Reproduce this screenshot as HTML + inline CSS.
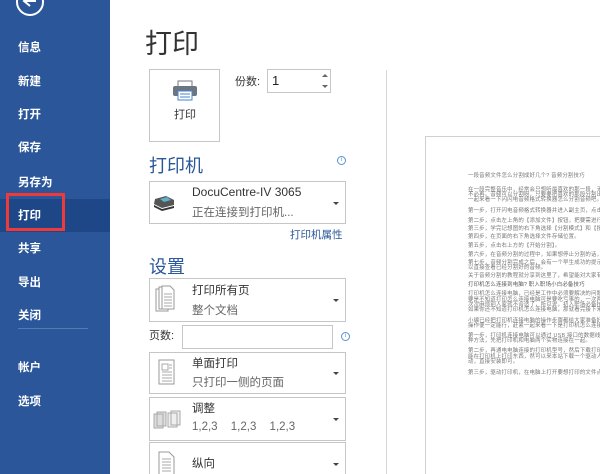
<!DOCTYPE html>
<html style="width:600px;height:474px;overflow:hidden"><head><meta charset="utf-8"><style>
*{margin:0;padding:0;box-sizing:border-box}
body{width:600px;height:474px;overflow:hidden;background:#fff;position:relative;font-family:"Liberation Sans","Noto Sans CJK SC",sans-serif;color:#444}
.a{position:absolute}
#side{left:0;top:0;width:110px;height:474px;background:#2b579a}
.m{position:absolute;left:18px;color:#fff;font-size:11.5px;font-weight:bold}
.dd{position:absolute;left:149px;width:197px;border:1px solid #c6c6c6;background:#fff}
.arr{position:absolute;right:6px;top:50%;margin-top:-1px;border-left:3px solid transparent;border-right:3px solid transparent;border-top:3px solid #444}
.t1{position:absolute;left:42px;font-size:11.5px;color:#333}
.t2{position:absolute;left:42px;font-size:11.5px;color:#666}
.h{position:absolute;left:149px;font-size:18px;color:#2b579a}
.pl{position:absolute;left:468px;font-size:5.4px;color:#777;white-space:nowrap;width:132px;overflow:hidden;letter-spacing:0.2px}
.info{position:absolute;width:9px;height:9px;border:1px solid #5b8fd6;border-radius:50%;color:#5b8fd6;font-size:6px;text-align:center;line-height:7px}
</style></head><body>
<div id="side" class="a">
 <div class="a" style="left:16px;top:-12px;width:28px;height:28px;border:2px solid #fff;border-radius:50%"></div>
 <svg class="a" style="left:20px;top:-5px" width="20" height="16"><path d="M16 6H5M10 1L4 6L10 11" stroke="#fff" stroke-width="2" fill="none"/></svg>
 <div class="m" style="top:39px">信息</div>
 <div class="m" style="top:73px">新建</div>
 <div class="m" style="top:106px">打开</div>
 <div class="m" style="top:139px">保存</div>
 <div class="m" style="top:174px">另存为</div>
 <div class="a" style="left:0;top:199px;width:110px;height:33px;background:#1e4788"></div>
 <div class="a" style="left:6px;top:193px;width:59px;height:38px;border:3px solid #f03a3a"></div>
 <div class="m" style="top:207px">打印</div>
 <div class="m" style="top:240px">共享</div>
 <div class="m" style="top:274px">导出</div>
 <div class="m" style="top:307px">关闭</div>
 <div class="a" style="left:18px;top:328px;width:70px;height:1px;background:#5679b0"></div>
 <div class="m" style="top:359px">帐户</div>
 <div class="m" style="top:393px">选项</div>
</div>
<div class="a" style="left:145px;top:22px;font-size:27px;color:#333">打印</div>
<div class="a" style="left:149px;top:69px;width:71px;height:73px;border:1px solid #c6c6c6"></div>
<svg class="a" style="left:172px;top:80px" width="26" height="22"><rect x="6" y="1" width="14" height="6" fill="#fff" stroke="#777"/><rect x="1" y="6" width="24" height="10" rx="2" fill="#6d7580"/><rect x="6" y="11" width="14" height="9" fill="#fff" stroke="#4a86d0"/><line x1="8" y1="14" x2="18" y2="14" stroke="#4a86d0"/><line x1="8" y1="17" x2="18" y2="17" stroke="#4a86d0"/></svg>
<div class="a" style="left:174px;top:106px;font-size:11px;color:#333">打印</div>
<div class="a" style="left:235px;top:73px;font-size:11px;color:#333">份数:</div>
<div class="a" style="left:267px;top:69px;width:64px;height:24px;border:1px solid #c6c6c6"></div>
<div class="a" style="left:272px;top:73px;font-size:13px;color:#222">1</div>
<div class="a" style="left:322px;top:74px;border-left:3px solid transparent;border-right:3px solid transparent;border-bottom:3px solid #666"></div>
<div class="a" style="left:322px;top:85px;border-left:3px solid transparent;border-right:3px solid transparent;border-top:3px solid #666"></div>
<div class="a" style="left:386px;top:70px;width:1px;height:404px;background:#d8d8d8"></div>
<div class="h" style="top:152px">打印机</div>
<div class="info" style="left:337px;top:156px">i</div>
<div class="dd" style="top:181px;height:43px">
 <svg class="a" style="left:2px;top:12px" width="24" height="18"><path d="M3 5L14 2L22 6L22 11L10 14L2 10Z" fill="#555"/><path d="M8 5L15 3L19 6L12 8Z" fill="#5db2c8"/><path d="M2 11L10 15L22 12L22 14L10 17L2 13Z" fill="#333"/></svg>
 <div class="t1" style="top:3px;font-size:12px">DocuCentre-IV 3065</div>
 <div class="t2" style="top:22px">正在连接到打印机...</div>
 <div class="arr"></div>
</div>
<div class="a" style="left:290px;top:227px;font-size:10.5px;color:#2b579a">打印机属性</div>
<div class="h" style="top:253px">设置</div>
<div class="dd" style="top:278px;height:44px">
 <svg class="a" style="left:5px;top:6px" width="24" height="30"><rect x="1" y="4" width="12" height="22" fill="#fff" stroke="#999"/><rect x="4" y="2" width="12" height="22" fill="#fff" stroke="#999"/><path d="M7 1H15L19 5V24H7Z" fill="#fff" stroke="#999"/><path d="M9 9H17M9 12H17M9 15H17M9 18H17M9 21H17" stroke="#aaa"/></svg>
 <div class="t1" style="top:3px">打印所有页</div>
 <div class="t2" style="top:23px">整个文档</div>
 <div class="arr"></div>
</div>
<div class="a" style="left:149px;top:327px;font-size:11px;color:#333">页数:</div>
<div class="a" style="left:182px;top:325px;width:151px;height:24px;border:1px solid #c6c6c6"></div>
<div class="info" style="left:341px;top:332px">i</div>
<div class="dd" style="top:352px;height:42px">
 <svg class="a" style="left:5px;top:6px" width="24" height="30"><path d="M4 1H19V25H4Z" fill="#fff" stroke="#999"/><rect x="7" y="5" width="6" height="6" fill="none" stroke="#aaa"/><path d="M14 6H17M14 9H17M7 13H17M7 16H17M7 19H17M7 22H17" stroke="#aaa"/></svg>
 <div class="t1" style="top:2px">单面打印</div>
 <div class="t2" style="top:21px">只打印一侧的页面</div>
 <div class="arr"></div>
</div>
<div class="dd" style="top:397px;height:44px">
 <svg class="a" style="left:3px;top:12px" width="30" height="20"><path d="M1 4H10V18H1ZM4 2H13V16H4Z" fill="#ddd" stroke="#aaa"/><path d="M15 3H24V17H15ZM18 1H27V15H18Z" fill="#eee" stroke="#aaa"/></svg>
 <div class="t1" style="top:2px">调整</div>
 <div class="t2" style="top:23px;word-spacing:10px">1,2,3 1,2,3 1,2,3</div>
 <div class="arr"></div>
</div>
<div class="dd" style="top:442px;height:32px;border-bottom:none">
 <svg class="a" style="left:7px;top:8px" width="20" height="24"><path d="M2 1H12L17 6V27H2Z" fill="#fff" stroke="#999"/><path d="M5 8H14M5 11H14M5 14H14M5 17H14M5 20H14" stroke="#aaa"/></svg>
 <div class="t1" style="top:12px">纵向</div>
 <div class="arr" style="margin-top:4px"></div>
</div>
<div class="a" style="left:425px;top:136px;width:175px;height:338px;border:1px solid #d0d0d0;border-right:none;border-bottom:none;background:#fff"></div>
<div class="pl" style="top:171px">一段音频文件怎么分割成好几个? 音频分割技巧</div>
<div class="pl" style="top:185px">在一段完整音乐中，经常会只想听最喜欢的那一段，无论</div>
<div class="pl" style="top:190px">不必再。音频可以分割呀，只要要把喜欢的那段分割出来</div>
<div class="pl" style="top:195px">一起来看一下闪闪电音频格式转换器怎么分割音频吧。</div>
<div class="pl" style="top:206px">第一步，打开闪电音频格式转换器并进入副主页，点击左</div>
<div class="pl" style="top:216px">第二步，点击左上角的【添加文件】按钮，把要需进行分</div>
<div class="pl" style="top:224px">第三步，学完记想图的右下角选择【分割模式】和【按照</div>
<div class="pl" style="top:232px">第四步，在页面的右下角选择文件存储位置。</div>
<div class="pl" style="top:241px">第五步，点击右上方的【开始分割】。</div>
<div class="pl" style="top:250px">第六步，在音频分割的过程中，如果想停止分割的话，</div>
<div class="pl" style="top:258px">第七步，音频分割完成之后，会有一个早生成功的提示框</div>
<div class="pl" style="top:263px">以直接查看已经分割好的音频。</div>
<div class="pl" style="top:271px">关于音频分割的教程就分享到这里了，希望能对大家有所</div>
<div class="pl" style="top:280px;color:#555">打印机怎么连接到电脑? 职入职场小白必备技巧</div>
<div class="pl" style="top:289px">打印机怎么连接电脑，已经是工作中必须要解决的问题了</div>
<div class="pl" style="top:295px">要是不知道打印怎么连接电脑可是要吃亏事的，一次两次</div>
<div class="pl" style="top:300px">次次麻烦别人家就不合适了，所以说，初入职场必备技能</div>
<div class="pl" style="top:305px">如果你还不知道打印机怎么连接电脑，那就看完接下来</div>
<div class="pl" style="top:316px">小编已经把打印机连接电脑的操作步骤都给大家准备好了</div>
<div class="pl" style="top:321px">操作便一定能行，赶紧一起来看一下是打印机怎么连接</div>
<div class="pl" style="top:331px">第一步，打印机连接电脑可以通过 USB 接口的数据线，</div>
<div class="pl" style="top:336px">种方法，先把打印机和电脑两个实物连接在一起。</div>
<div class="pl" style="top:346px">第二步，再通电电脑连接的打印机型号，然后下载打印驱</div>
<div class="pl" style="top:352px">能在打印机上打印东西，然可以来本站下载一个驱动人生</div>
<div class="pl" style="top:357px">动，直接安装即可。</div>
<div class="pl" style="top:368px">第三步，驱动打印机，在电脑上打开要想打印的文件点击</div>
</body></html>
